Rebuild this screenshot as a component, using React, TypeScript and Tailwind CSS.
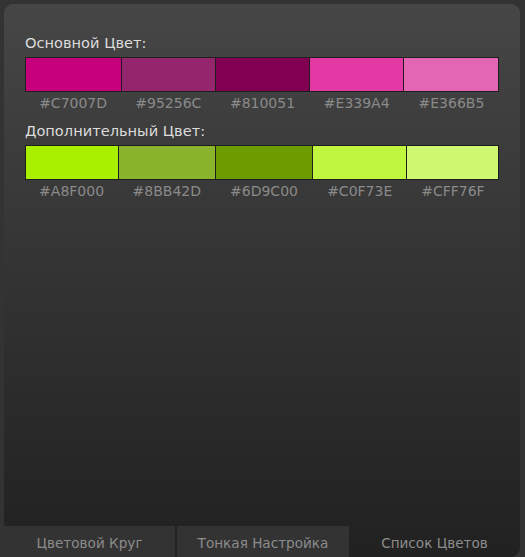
import React from "react";

const primary = [
  { c: "#C7007D", w: 96 },
  { c: "#95256C", w: 94 },
  { c: "#810051", w: 94 },
  { c: "#E339A4", w: 94 },
  { c: "#E366B5", w: 95 },
];
const secondary = [
  { c: "#A8F000", w: 93 },
  { c: "#8BB42D", w: 97 },
  { c: "#6D9C00", w: 97 },
  { c: "#C0F73E", w: 94 },
  { c: "#CFF76F", w: 92 },
];

function Group({ title, items }: { title: string; items: { c: string; w: number }[] }) {
  return (
    <div className="flex flex-col">
      <div className="text-[14.6px] leading-[16px] text-[#dcdcdc]">{title}</div>
      <div className="mt-[6px] flex h-[35px] w-[474px] border border-[#1e1e1e] bg-[#1e1e1e] gap-px">
        {items.map((it, i) => (
          <div key={i} className="h-full flex-auto" style={{ background: it.c, width: it.w }} />
        ))}
      </div>
      <div className="mt-[3px] flex w-[474px]">
        {items.map((it, i) => (
          <div
            key={i}
            className="flex-auto text-center text-[14px] leading-[16px] text-[#8a8a8a]"
            style={{ width: it.w }}
          >
            {it.c}
          </div>
        ))}
      </div>
    </div>
  );
}

export default function App() {
  return (
    <div
      className="w-[525px] h-[557px] bg-[#333333] pt-1 pl-1 pr-[5px] flex flex-col"
      style={{ fontFamily: '"DejaVu Sans", Verdana, sans-serif' }}
    >
      <div className="flex-1 flex flex-col rounded-t-[9px] rounded-br-[9px] overflow-hidden bg-gradient-to-b from-[#464646] to-[#212121]">
        <div className="flex-1 pl-[21px] pt-[31px] flex flex-col gap-[12px]">
          <Group title="Основной Цвет:" items={primary} />
          <Group title="Дополнительный Цвет:" items={secondary} />
        </div>
        <div className="flex h-[31px] text-[13.6px] text-[#8c8c8c]">
          <div className="w-[171px] bg-[#333333] flex items-center justify-center pt-[3px]">Цветовой Круг</div>
          <div className="w-[2px] bg-[#222222]" />
          <div className="w-[172px] bg-[#333333] flex items-center justify-center pt-[3px]">Тонкая Настройка</div>
          <div className="flex-1 flex items-center justify-center pt-[3px]">Список Цветов</div>
        </div>
      </div>
    </div>
  );
}
